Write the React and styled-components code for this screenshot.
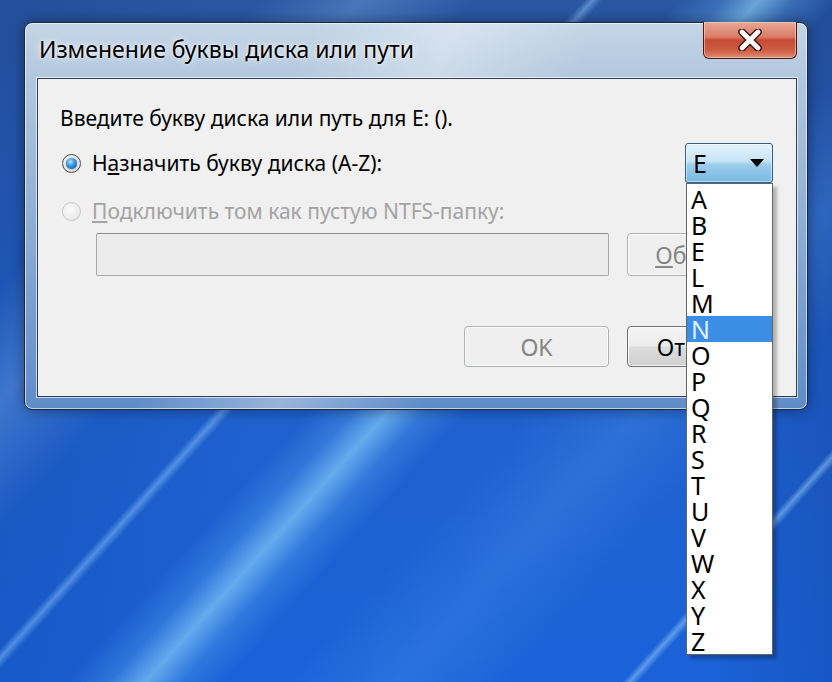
import styled, { createGlobalStyle } from "styled-components";

const GlobalStyle = createGlobalStyle`
  html, body {
    margin: 0;
    padding: 0;
  }
  body {
    width: 832px;
    height: 682px;
    overflow: hidden;
    font-family: "Noto Sans", "Open Sans", sans-serif;
  }
`;

const Desktop = styled.div`
  width: 832px;
  height: 682px;
  box-sizing: border-box;
  padding: 22px 24px 0 24px;
  background:
    linear-gradient(132deg, transparent 47%, rgba(110, 190, 250, 0.25) 50%, rgba(150, 220, 255, 0.6) 52.5%, rgba(110, 190, 250, 0.25) 55%, transparent 58%),
    linear-gradient(132deg, transparent 40.4%, rgba(150, 205, 255, 0.45) 41%, transparent 41.7%),
    linear-gradient(132deg, transparent 85.5%, rgba(160, 210, 255, 0.5) 86%, transparent 86.6%),
    linear-gradient(132deg, transparent 18%, rgba(130, 175, 230, 0.35) 25%, transparent 33%),
    linear-gradient(132deg, transparent 62%, rgba(90, 160, 240, 0.25) 70%, transparent 78%),
    linear-gradient(90deg, rgba(10, 40, 110, 0.15) 0%, transparent 30%, transparent 85%, rgba(10, 40, 110, 0.2) 100%),
    linear-gradient(180deg, #2a56a2 0%, #1f60cc 55%, #1a62d9 100%);
`;

const Window = styled.div`
  width: 784px;
  height: 388px;
  box-sizing: border-box;
  border: 1px solid #1b283c;
  border-radius: 8px;
  padding: 0 10px 12px 12px;
  display: flex;
  flex-direction: column;
  background:
    linear-gradient(115deg, transparent 30%, rgba(255, 255, 255, 0.35) 45%, transparent 60%),
    linear-gradient(180deg, #c4d5e7 0%, #b2c8de 14%, #a4bdd8 30%, #86a8d2 60%, #5f8cc8 100%);
  box-shadow: inset 0 0 0 1px rgba(255, 255, 255, 0.6), 0 0 14px rgba(0, 0, 0, 0.4);
`;

const TitleBar = styled.div`
  height: 55px;
  display: flex;
  justify-content: space-between;
  align-items: flex-start;
`;

const Title = styled.div`
  margin-top: 11px;
  padding-left: 2px;
  font-size: 23px;
  line-height: 30px;
  color: #000;
  text-shadow: 0 0 8px rgba(255, 255, 255, 0.9), 0 0 3px rgba(255, 255, 255, 0.8);
`;

const CloseButton = styled.div`
  width: 94px;
  height: 37px;
  margin-top: -1px;
  box-sizing: border-box;
  border: 1px solid #4b1a12;
  border-top: none;
  border-radius: 0 0 6px 6px;
  display: flex;
  align-items: center;
  justify-content: center;
  background: linear-gradient(180deg, #e9a898 0%, #d97b66 42%, #c54a33 50%, #cf5e46 80%, #df8f74 100%);
  box-shadow: inset 0 0 0 1px rgba(255, 220, 210, 0.55);
`;

const Client = styled.div`
  flex: 1;
  background: #f0f0f0;
  border: 1px solid #2f3e56;
  box-shadow: 0 0 0 1px rgba(255, 255, 255, 0.65);
  padding: 0 24px 0 22px;
  display: flex;
  flex-direction: column;
  font-size: 21px;
  color: #000;
`;

const Prompt = styled.div`
  margin-top: 26px;
  line-height: 26px;
`;

const Row = styled.div`
  display: flex;
  align-items: center;
  height: ${(p) => p.$h}px;
  margin-top: ${(p) => p.$mt}px;
  justify-content: ${(p) => (p.$end ? "flex-end" : "flex-start")};
  gap: ${(p) => p.$gap || 0}px;
`;

const Option = styled.label`
  display: flex;
  align-items: center;
  gap: 11px;
  margin-left: 2px;
  color: ${(p) => (p.$disabled ? "#a3a3a3" : "#000")};
`;

const Radio = styled.span`
  width: 19px;
  height: 19px;
  box-sizing: border-box;
  border-radius: 50%;
  display: flex;
  align-items: center;
  justify-content: center;
  border: 1px solid ${(p) => (p.$disabled ? "#c8c8c8" : "#4e4e4e")};
  background: ${(p) =>
    p.$disabled
      ? "radial-gradient(circle at 40% 35%, #fbfbfb, #e2e2e2)"
      : "radial-gradient(circle at 40% 35%, #ffffff, #d0d0d0)"};
`;

const RadioDot = styled.span`
  width: 11px;
  height: 11px;
  border-radius: 50%;
  background: radial-gradient(circle at 40% 35%, #bfe6ff 0%, #3a9ae0 40%, #0b4f9a 100%);
  box-shadow: 0 0 1px #0a3d7a;
`;

const Spacer = styled.div`
  flex: 1;
`;

const ComboWrap = styled.div`
  position: relative;
  width: 88px;
  height: 40px;
  margin-right: -1px;
`;

const Combo = styled.div`
  height: 100%;
  box-sizing: border-box;
  border: 1px solid #2c5f8c;
  border-radius: 3px;
  display: flex;
  align-items: center;
  justify-content: space-between;
  padding: 0 8px 0 7px;
  font-size: 25px;
  background: linear-gradient(180deg, #e4f3fc 0%, #c6e4f6 45%, #9bcdec 55%, #78b9e2 100%);
  box-shadow: inset 0 0 0 1px rgba(255, 255, 255, 0.5);
`;

const Arrow = styled.span`
  width: 0;
  height: 0;
  border-left: 7px solid transparent;
  border-right: 7px solid transparent;
  border-top: 8px solid #000;
`;

const DropList = styled.div`
  position: absolute;
  top: 100%;
  left: 1px;
  width: 87px;
  box-sizing: border-box;
  border: 1px solid #646464;
  padding-top: 2px;
  background: #fff;
  z-index: 10;
  box-shadow: 4px 4px 3px rgba(0, 0, 0, 0.25);
`;

const DropItem = styled.div`
  height: 26px;
  line-height: 26px;
  padding-left: 4px;
  font-size: 25px;
  background: ${(p) => (p.$selected ? "#3b8ee3" : "transparent")};
  color: ${(p) => (p.$selected ? "#e4f1ff" : "#000")};
`;

const PathInput = styled.div`
  margin-left: 36px;
  width: 513px;
  height: 43px;
  box-sizing: border-box;
  border: 1px solid #a8a8a8;
  border-top-color: #8c8c8c;
  border-radius: 2px;
  background: #ececec;
`;

const Button = styled.div`
  width: 145px;
  height: ${(p) => p.$h}px;
  box-sizing: border-box;
  border: 1px solid ${(p) => (p.$disabled ? "#adb2b5" : "#707070")};
  border-radius: 4px;
  display: flex;
  align-items: center;
  justify-content: center;
  font-size: 23px;
  color: ${(p) => (p.$disabled ? "#858585" : "#000")};
  background: ${(p) =>
    p.$disabled
      ? "#efefef"
      : "linear-gradient(180deg, #f4f4f4 0%, #ececec 48%, #dcdcdc 52%, #d0d0d0 100%)"};
  box-shadow: inset 0 0 0 1px rgba(255, 255, 255, 0.8);
`;

const letters = ["A", "B", "E", "L", "M", "N", "O", "P", "Q", "R", "S", "T", "U", "V", "W", "X", "Y", "Z"];

function CloseIcon() {
  return (
    <svg width="28" height="22" viewBox="0 0 28 22">
      <path d="M6 3 L22 19 M22 3 L6 19" stroke="#3a1a14" strokeWidth="7.5" strokeLinecap="round" />
      <path d="M6 3 L22 19 M22 3 L6 19" stroke="#ffffff" strokeWidth="4.6" strokeLinecap="round" />
    </svg>
  );
}

export default function App() {
  return (
    <Desktop>
      <GlobalStyle />
      <Window>
        <TitleBar>
          <Title>Изменение буквы диска или пути</Title>
          <CloseButton>
            <CloseIcon />
          </CloseButton>
        </TitleBar>
        <Client>
          <Prompt>Введите букву диска или путь для E: ().</Prompt>
          <Row $h={40} $mt={12}>
            <Option>
              <Radio>
                <RadioDot />
              </Radio>
              <span>
                Н<u>а</u>значить букву диска (A-Z):
              </span>
            </Option>
            <Spacer />
            <ComboWrap>
              <Combo>
                <span>E</span>
                <Arrow />
              </Combo>
              <DropList>
                {letters.map((l) => (
                  <DropItem key={l} $selected={l === "N"}>
                    {l}
                  </DropItem>
                ))}
              </DropList>
            </ComboWrap>
          </Row>
          <Row $h={28} $mt={14}>
            <Option $disabled>
              <Radio $disabled />
              <span>
                <u>П</u>одключить том как пустую NTFS-папку:
              </span>
            </Option>
          </Row>
          <Row $h={43} $mt={8} $gap={18}>
            <PathInput />
            <Button $h={43} $disabled>
              <span>
                <u>О</u>бзор...
              </span>
            </Button>
          </Row>
          <Row $h={41} $mt={50} $gap={18} $end>
            <Button $h={41} $disabled>
              OK
            </Button>
            <Button $h={41}>Отмена</Button>
          </Row>
        </Client>
      </Window>
    </Desktop>
  );
}
